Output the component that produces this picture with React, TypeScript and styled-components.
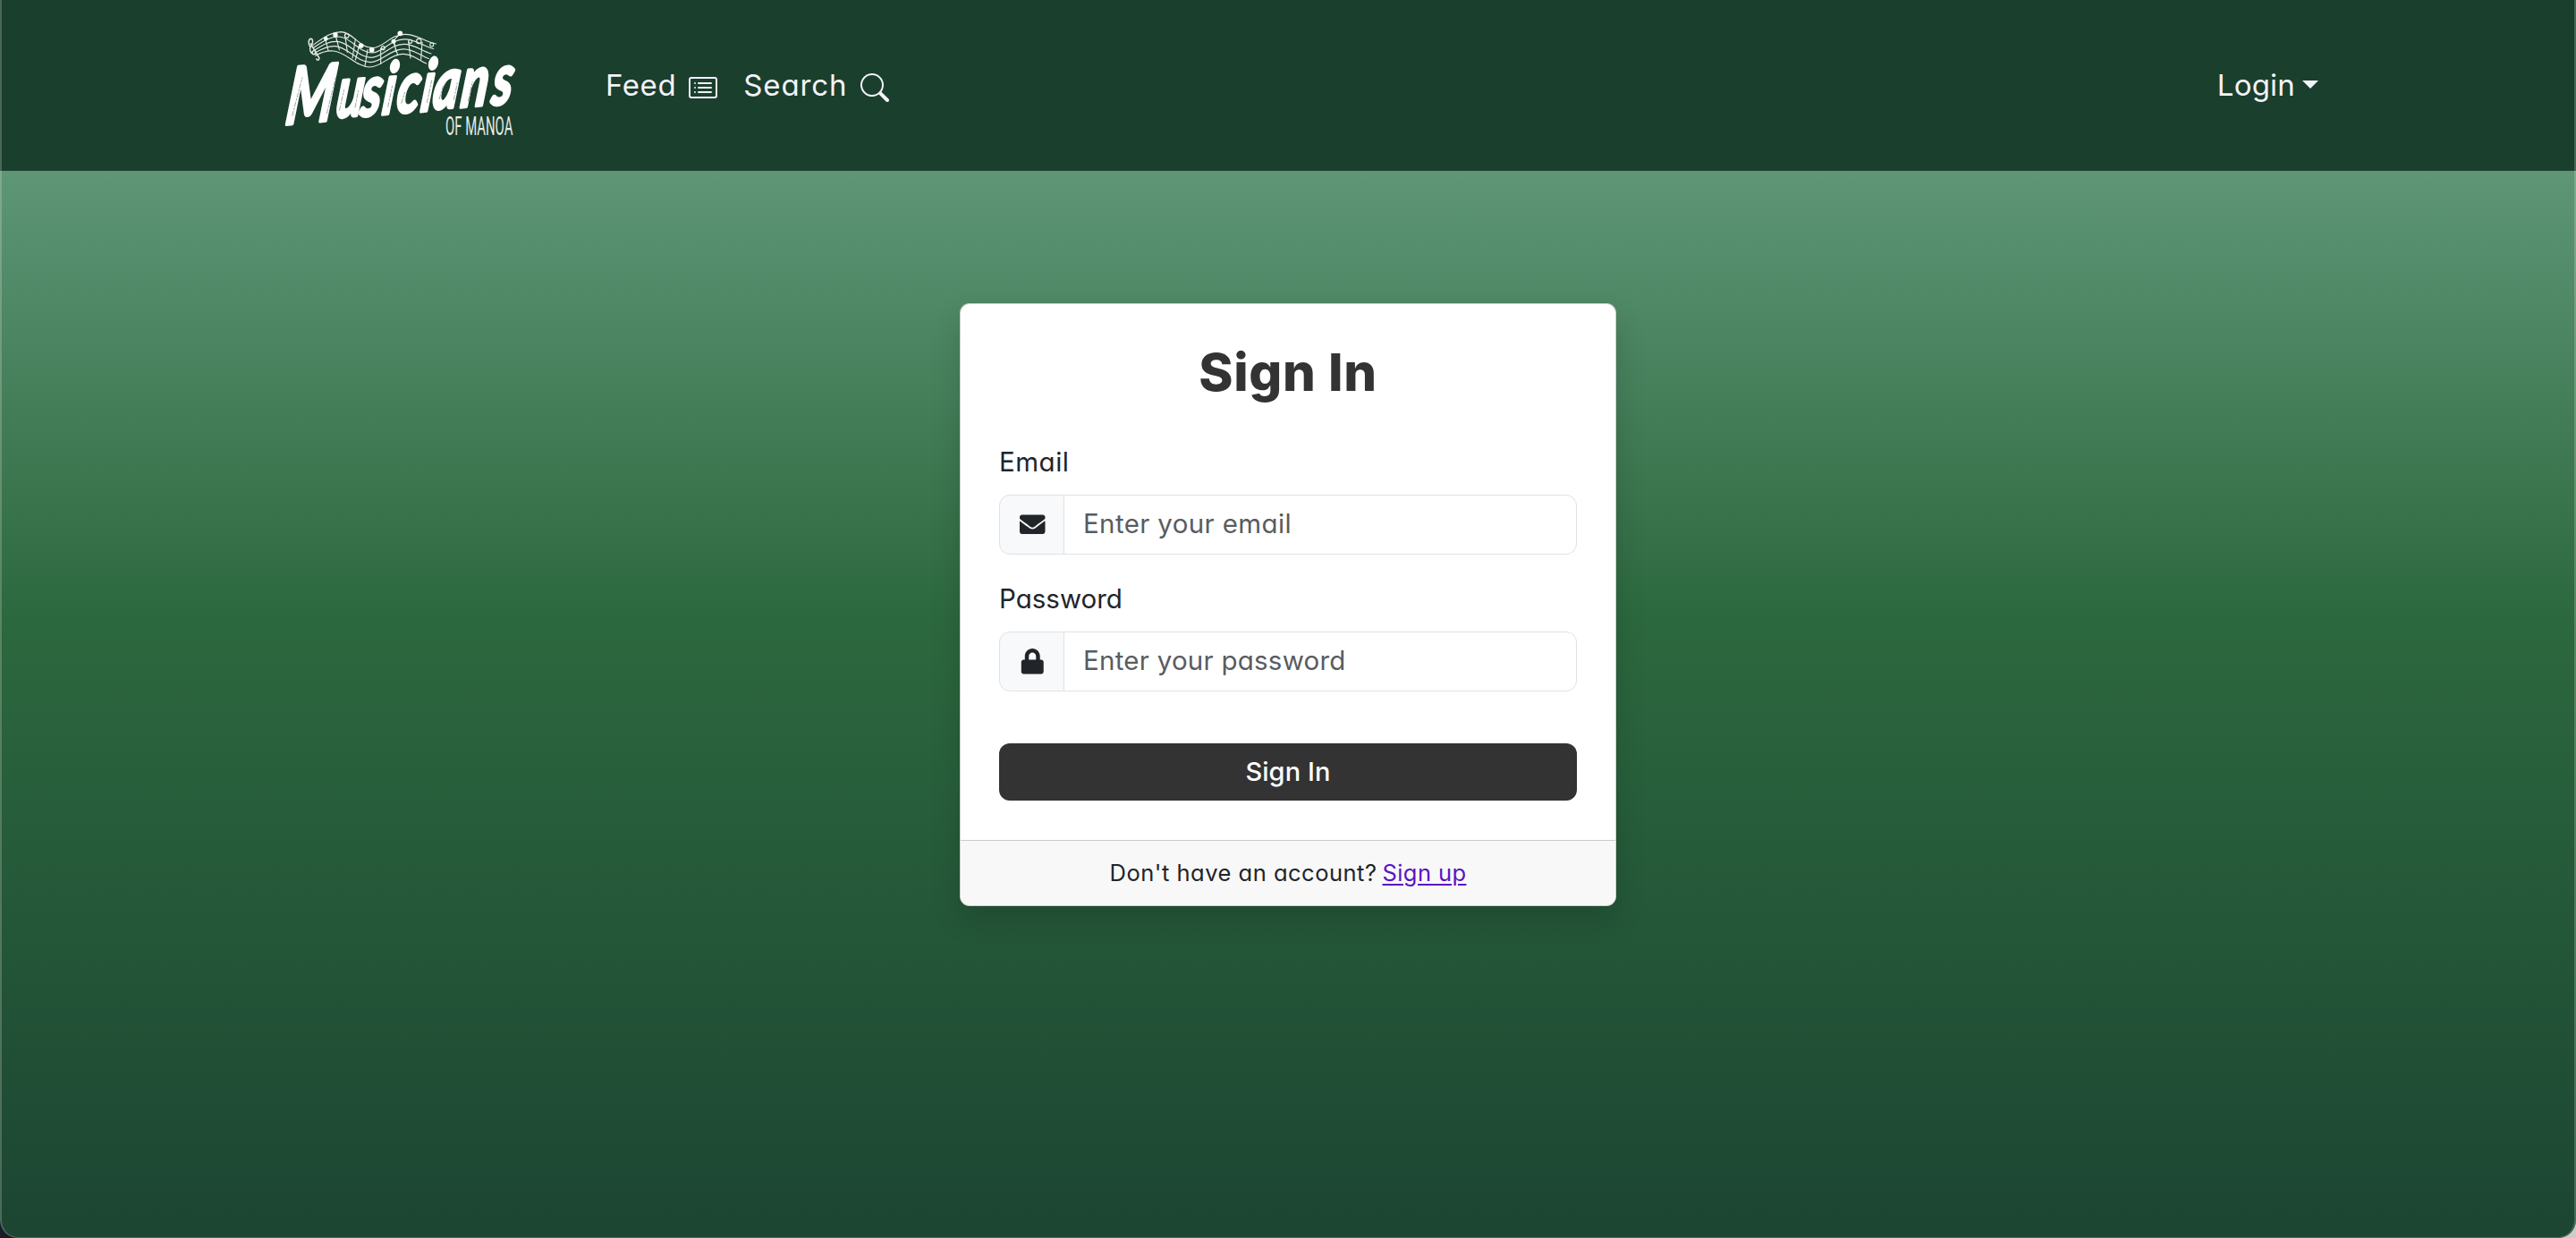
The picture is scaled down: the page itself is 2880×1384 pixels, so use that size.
import React from "react";
import styled, { createGlobalStyle } from "styled-components";
import { BsCardList, BsSearch } from "react-icons/bs";
import { FaEnvelope, FaLock } from "react-icons/fa";

const GlobalStyle = createGlobalStyle`
  *, *::before, *::after { box-sizing: border-box; }
  body {
    margin: 0;
    background: linear-gradient(to right, #1a1b27 50%, #cfccc6 50%);
    color: #212529;
    font-family: Inter, "Noto Sans", sans-serif;
    font-feature-settings: "cv11";
  }
  input, button { font-family: inherit; font-feature-settings: inherit; }
`;

const Page = styled.div`
  height: 1384px;
  position: relative;
  display: flex;
  flex-direction: column;
  overflow: hidden;
  border-radius: 0 0 20px 20px;
  background: linear-gradient(to bottom, #5e9676 191px, #2c683e 692px, #1c4532 1384px);

  /* thin highlight along the window's edge */
  &::after {
    content: "";
    position: absolute;
    inset: 0;
    border: 2px solid rgba(255, 255, 255, 0.2);
    border-top: 0;
    border-bottom-width: 1px;
    border-radius: inherit;
    pointer-events: none;
  }
`;

const Navbar = styled.nav`
  height: 191px;
  flex: none;
  display: flex;
  align-items: center;
  padding: 0 288px 0 300px;
  background: #1b3f2d;
`;

const Brand = styled.a`
  display: block;
  width: 300px;
  height: 150px;
  margin-right: 77px;
`;

const LogoArt = styled.svg`
  display: block;
  width: 300px;
  height: 150px;
  overflow: visible;
  fill: #fff;
`;

const NavLinks = styled.div`
  display: flex;
  align-items: center;
  gap: 29px;
`;

const NavLink = styled.a<{ $spacing: number; $gap: number }>`
  display: flex;
  align-items: center;
  gap: ${(p) => p.$gap}px;
  color: #f3f3fa;
  font-size: 33px;
  line-height: 39px;
  letter-spacing: ${(p) => p.$spacing}px;
  text-decoration: none;

  svg {
    width: 32px;
    height: 32px;
    position: relative;
    top: 2px;
  }
`;

const NavEnd = styled.div`
  margin-left: auto;
`;

const Caret = styled.span`
  margin-top: -3px;
  border-top: 9px solid #f3f3fa;
  border-left: 9px solid transparent;
  border-right: 9px solid transparent;
`;

const Main = styled.main`
  display: flex;
  justify-content: center;
  padding-top: 148px;
`;

const Card = styled.section`
  width: 734px;
  height: 674px;
  display: flex;
  flex-direction: column;
  overflow: hidden;
  border: 1px solid rgba(0, 0, 0, 0.175);
  border-radius: 11px;
  background: #fff;
  box-shadow: 0 16px 32px rgba(0, 0, 0, 0.15);
`;

const CardBody = styled.form`
  display: flex;
  flex-direction: column;
  padding: 43px 43px 44px;
`;

const Title = styled.h1`
  margin: -1px 0 49px;
  color: #333;
  font-size: 58px;
  font-weight: 800;
  line-height: 68px;
  letter-spacing: 0.7px;
  text-align: center;
`;

const Field = styled.div`
  display: flex;
  flex-direction: column;
  margin-bottom: 32px;
`;

const Label = styled.label<{ $spacing: number }>`
  margin-bottom: 19px;
  font-size: 29.5px;
  line-height: 35px;
  letter-spacing: ${(p) => p.$spacing}px;
`;

const InputGroup = styled.div`
  display: flex;
  height: 67px;
`;

const Addon = styled.span`
  width: 73px;
  display: flex;
  align-items: center;
  justify-content: center;
  padding-left: 2px;
  border: 1px solid #dee2e6;
  border-radius: 12px 0 0 12px;
  background: #f8f9fa;
  font-size: 28.5px;
`;

const Input = styled.input<{ $spacing: number }>`
  flex: 1;
  min-width: 0;
  margin-left: -1px;
  padding: 0 22px 3px 21px;
  border: 1px solid #dee2e6;
  border-radius: 0 12px 12px 0;
  background: #fff;
  color: #212529;
  font-size: 29.5px;
  letter-spacing: ${(p) => p.$spacing}px;
  outline: none;

  &::placeholder {
    color: #595c5f;
    opacity: 1;
  }
`;

const SubmitButton = styled.button`
  height: 64px;
  margin-top: 26px;
  padding: 0 0 2px;
  border: 0;
  border-radius: 12px;
  background: #333;
  color: #fff;
  font-size: 29px;
  font-weight: 500;
  letter-spacing: 0.1px;
`;

const CardFooter = styled.div`
  flex: 1;
  display: flex;
  align-items: center;
  justify-content: center;
  gap: 6px;
  padding-bottom: 2px;
  border-top: 1px solid #cacaca;
  background: #f8f8f8;
  font-size: 25.5px;
  letter-spacing: 0.5px;
`;

const SignUpLink = styled.a`
  color: #5a14c4;
  letter-spacing: 0.4px;
  text-decoration: underline;
  text-decoration-thickness: 2px;
  text-underline-offset: 3px;
`;

type Point = [number, number];

const topLine: Point[] = [
  [150, 88], [190, 60], [212, 44], [244, 44], [285, 46], [305, 98], [350, 98],
  [385, 98], [410, 52], [458, 52], [500, 52], [520, 76], [562, 84],
];
const bottomLine: Point[] = [
  [158, 124], [178, 112], [195, 106], [218, 108], [262, 112], [295, 161], [340, 162],
  [380, 162], [405, 119], [452, 118], [485, 118], [505, 140], [530, 150],
];

/* a staff line lying at fraction t between the outer two */
const staffPath = (t: number) => {
  const pts = topLine.map(([x, y], i) => {
    const [bx, by] = bottomLine[i];
    return `${x + (bx - x) * t} ${y + (by - y) * t}`;
  });
  return `M${pts[0]} C${pts.slice(1).join(" ")}`;
};

const letterX = (xs: number[]) => xs.map((x) => (x - 60) / 0.7).join(" ");

const Logo = () => (
  <LogoArt viewBox="0 0 900 450">
    <g fill="none" stroke="#e4ebe6" strokeWidth="3.4" strokeLinecap="round">
      {[0, 0.25, 0.5, 0.75, 1].map((t) => (
        <path key={t} d={staffPath(t)} />
      ))}
      <path d="M191 68l10 38M225 54l13 50M257 54l8 58M292 68l-10 64M305 90l-13 48M333 104l-9 54M377 99v52M420 78l14 44M440 52l-17 18M470 76l7 56M516 78l-4 58M424 84l4 26" />
      <path d="M141 95c-8-10-7-26 1-28 10 0 8 16 0 26-6 10 0 24 10 26 10 0 10-14 0-12-8 3-5 12 0 12M142 84l28 46c4 8-8 12-8 4" strokeWidth="4.5" />
      <circle cx="263" cy="57" r="7" />
      <circle cx="505" cy="75" r="8" />
      <circle cx="385" cy="98" r="6" />
      <circle cx="476" cy="76" r="6" />
      <circle cx="548" cy="87" r="6" />
    </g>
    <circle cx="193" cy="67" r="7" />
    <circle cx="225" cy="54" r="8" />
    <circle cx="311" cy="90" r="8.5" />
    <circle cx="347" cy="104" r="8.5" />
    <circle cx="420" cy="76" r="7.5" />
    <circle cx="442" cy="49" r="8.5" />
    <g transform="translate(60 350) skewY(-5.2) skewX(-7) scale(0.7 1)">
      <text
        fontFamily="Lato, sans-serif"
        fontStyle="italic"
        fontWeight="700"
        fontSize="238"
        stroke="#fff"
        strokeWidth="11"
        strokeLinejoin="round"
        x={letterX([54, 222, 305, 378, 426, 507, 547, 641, 746])}
        y="4 -4 0 0 0 2 -2 0 2"
      >
        <tspan fontSize="262">M</tspan>usicians
      </text>
    </g>
    <g stroke="#1b3f2d" strokeWidth="2.4" strokeDasharray="17 4 8 3" opacity="0.55">
      <path d="M80 326L114 196M196 318L226 196M238 308L254 238M291 298L302 240M401 296L416 224M446 284L458 246M532 282L548 206M573 270L586 226M622 272L634 214M670 276L685 210" />
    </g>
    <text
      x="594"
      y="389"
      fontFamily="Roboto, sans-serif"
      fontWeight="400"
      fontSize="87"
      fill="#e6ece8"
      textLength="226"
      lengthAdjust="spacingAndGlyphs"
    >
      OF MANOA
    </text>
  </LogoArt>
);

export default function App() {
  return (
    <>
      <GlobalStyle />
      <Page>
        <Navbar>
          <Brand>
            <Logo />
          </Brand>
          <NavLinks>
            <NavLink $spacing={0.6} $gap={14}>
              Feed
              <BsCardList />
            </NavLink>
            <NavLink $spacing={0.9} $gap={14}>
              Search
              <BsSearch />
            </NavLink>
          </NavLinks>
          <NavEnd>
            <NavLink $spacing={0.2} $gap={8}>
              Login
              <Caret />
            </NavLink>
          </NavEnd>
        </Navbar>
        <Main>
          <Card>
            <CardBody>
              <Title>Sign In</Title>
              <Field>
                <Label htmlFor="email" $spacing={0.5}>Email</Label>
                <InputGroup>
                  <Addon>
                    <FaEnvelope />
                  </Addon>
                  <Input id="email" type="email" placeholder="Enter your email" $spacing={0.37} />
                </InputGroup>
              </Field>
              <Field>
                <Label htmlFor="password" $spacing={0}>Password</Label>
                <InputGroup>
                  <Addon>
                    <FaLock />
                  </Addon>
                  <Input id="password" type="password" placeholder="Enter your password" $spacing={0.25} />
                </InputGroup>
              </Field>
              <SubmitButton type="button">Sign In</SubmitButton>
            </CardBody>
            <CardFooter>
              <span>Don't have an account?</span>
              <SignUpLink>Sign up</SignUpLink>
            </CardFooter>
          </Card>
        </Main>
      </Page>
    </>
  );
}
